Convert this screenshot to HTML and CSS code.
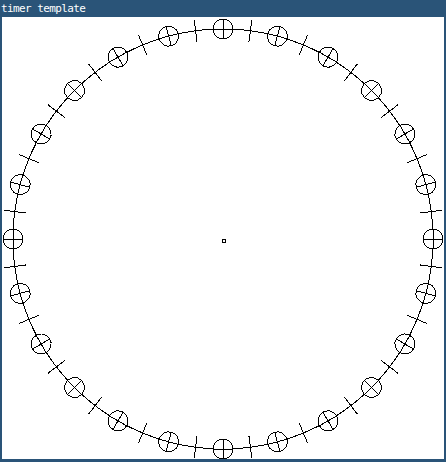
FILE: index.html
```html
<!DOCTYPE html>
<html>
<head>
<meta charset="utf-8">
<title>timer template</title>
<link rel="stylesheet" href="styles.css">
</head>
<body>
<div class="window">
  <div class="titlebar">timer template</div>
  <div class="canvas">
    <svg class="dial" width="442" height="442" viewBox="0 0 442 442">
      <defs>
        <g id="mark">
          <circle cx="221" cy="12" r="10" fill="#fff" stroke="#000"/>
          <line x1="211" y1="12" x2="231" y2="12" stroke="#000"/>
          <line x1="221" y1="2" x2="221" y2="22" stroke="#000"/>
        </g>
        <line id="tick" x1="221" y1="1" x2="221" y2="23" stroke="#000"/>
      </defs>
      <circle cx="221" cy="222" r="210" fill="none" stroke="#000"/>
      <use href="#tick" transform="rotate(7.5 221 222)"/>
      <use href="#tick" transform="rotate(22.5 221 222)"/>
      <use href="#tick" transform="rotate(37.5 221 222)"/>
      <use href="#tick" transform="rotate(52.5 221 222)"/>
      <use href="#tick" transform="rotate(67.5 221 222)"/>
      <use href="#tick" transform="rotate(82.5 221 222)"/>
      <use href="#tick" transform="rotate(97.5 221 222)"/>
      <use href="#tick" transform="rotate(112.5 221 222)"/>
      <use href="#tick" transform="rotate(127.5 221 222)"/>
      <use href="#tick" transform="rotate(142.5 221 222)"/>
      <use href="#tick" transform="rotate(157.5 221 222)"/>
      <use href="#tick" transform="rotate(172.5 221 222)"/>
      <use href="#tick" transform="rotate(187.5 221 222)"/>
      <use href="#tick" transform="rotate(202.5 221 222)"/>
      <use href="#tick" transform="rotate(217.5 221 222)"/>
      <use href="#tick" transform="rotate(232.5 221 222)"/>
      <use href="#tick" transform="rotate(247.5 221 222)"/>
      <use href="#tick" transform="rotate(262.5 221 222)"/>
      <use href="#tick" transform="rotate(277.5 221 222)"/>
      <use href="#tick" transform="rotate(292.5 221 222)"/>
      <use href="#tick" transform="rotate(307.5 221 222)"/>
      <use href="#tick" transform="rotate(322.5 221 222)"/>
      <use href="#tick" transform="rotate(337.5 221 222)"/>
      <use href="#tick" transform="rotate(352.5 221 222)"/>
      <use href="#mark"/>
      <use href="#mark" transform="rotate(15 221 222)"/>
      <use href="#mark" transform="rotate(30 221 222)"/>
      <use href="#mark" transform="rotate(45 221 222)"/>
      <use href="#mark" transform="rotate(60 221 222)"/>
      <use href="#mark" transform="rotate(75 221 222)"/>
      <use href="#mark" transform="rotate(90 221 222)"/>
      <use href="#mark" transform="rotate(105 221 222)"/>
      <use href="#mark" transform="rotate(120 221 222)"/>
      <use href="#mark" transform="rotate(135 221 222)"/>
      <use href="#mark" transform="rotate(150 221 222)"/>
      <use href="#mark" transform="rotate(165 221 222)"/>
      <use href="#mark" transform="rotate(180 221 222)"/>
      <use href="#mark" transform="rotate(195 221 222)"/>
      <use href="#mark" transform="rotate(210 221 222)"/>
      <use href="#mark" transform="rotate(225 221 222)"/>
      <use href="#mark" transform="rotate(240 221 222)"/>
      <use href="#mark" transform="rotate(255 221 222)"/>
      <use href="#mark" transform="rotate(270 221 222)"/>
      <use href="#mark" transform="rotate(285 221 222)"/>
      <use href="#mark" transform="rotate(300 221 222)"/>
      <use href="#mark" transform="rotate(315 221 222)"/>
      <use href="#mark" transform="rotate(330 221 222)"/>
      <use href="#mark" transform="rotate(345 221 222)"/>
      <rect x="220.5" y="222.5" width="3" height="3" fill="#fff" stroke="#000"/>
    </svg>
  </div>
</div>
</body>
</html>
```
FILE: styles.css
```css
html, body {
  margin: 0;
  padding: 0;
  background: #2a5478;
}
.window {
  width: 446px;
  height: 462px;
  background: #2a5478;
  display: flex;
  flex-direction: column;
  box-sizing: border-box;
  padding: 0 2px 3px 2px;
}
.titlebar {
  height: 17px;
  line-height: 17px;
  margin-left: -1px;
  color: #ffffff;
  font-family: "DejaVu Sans Mono", monospace;
  font-size: 11px;
  letter-spacing: -0.6px;
  white-space: nowrap;
}
.canvas {
  width: 442px;
  height: 442px;
  background: #ffffff;
}
.dial {
  display: block;
  shape-rendering: crispEdges;
}
```
